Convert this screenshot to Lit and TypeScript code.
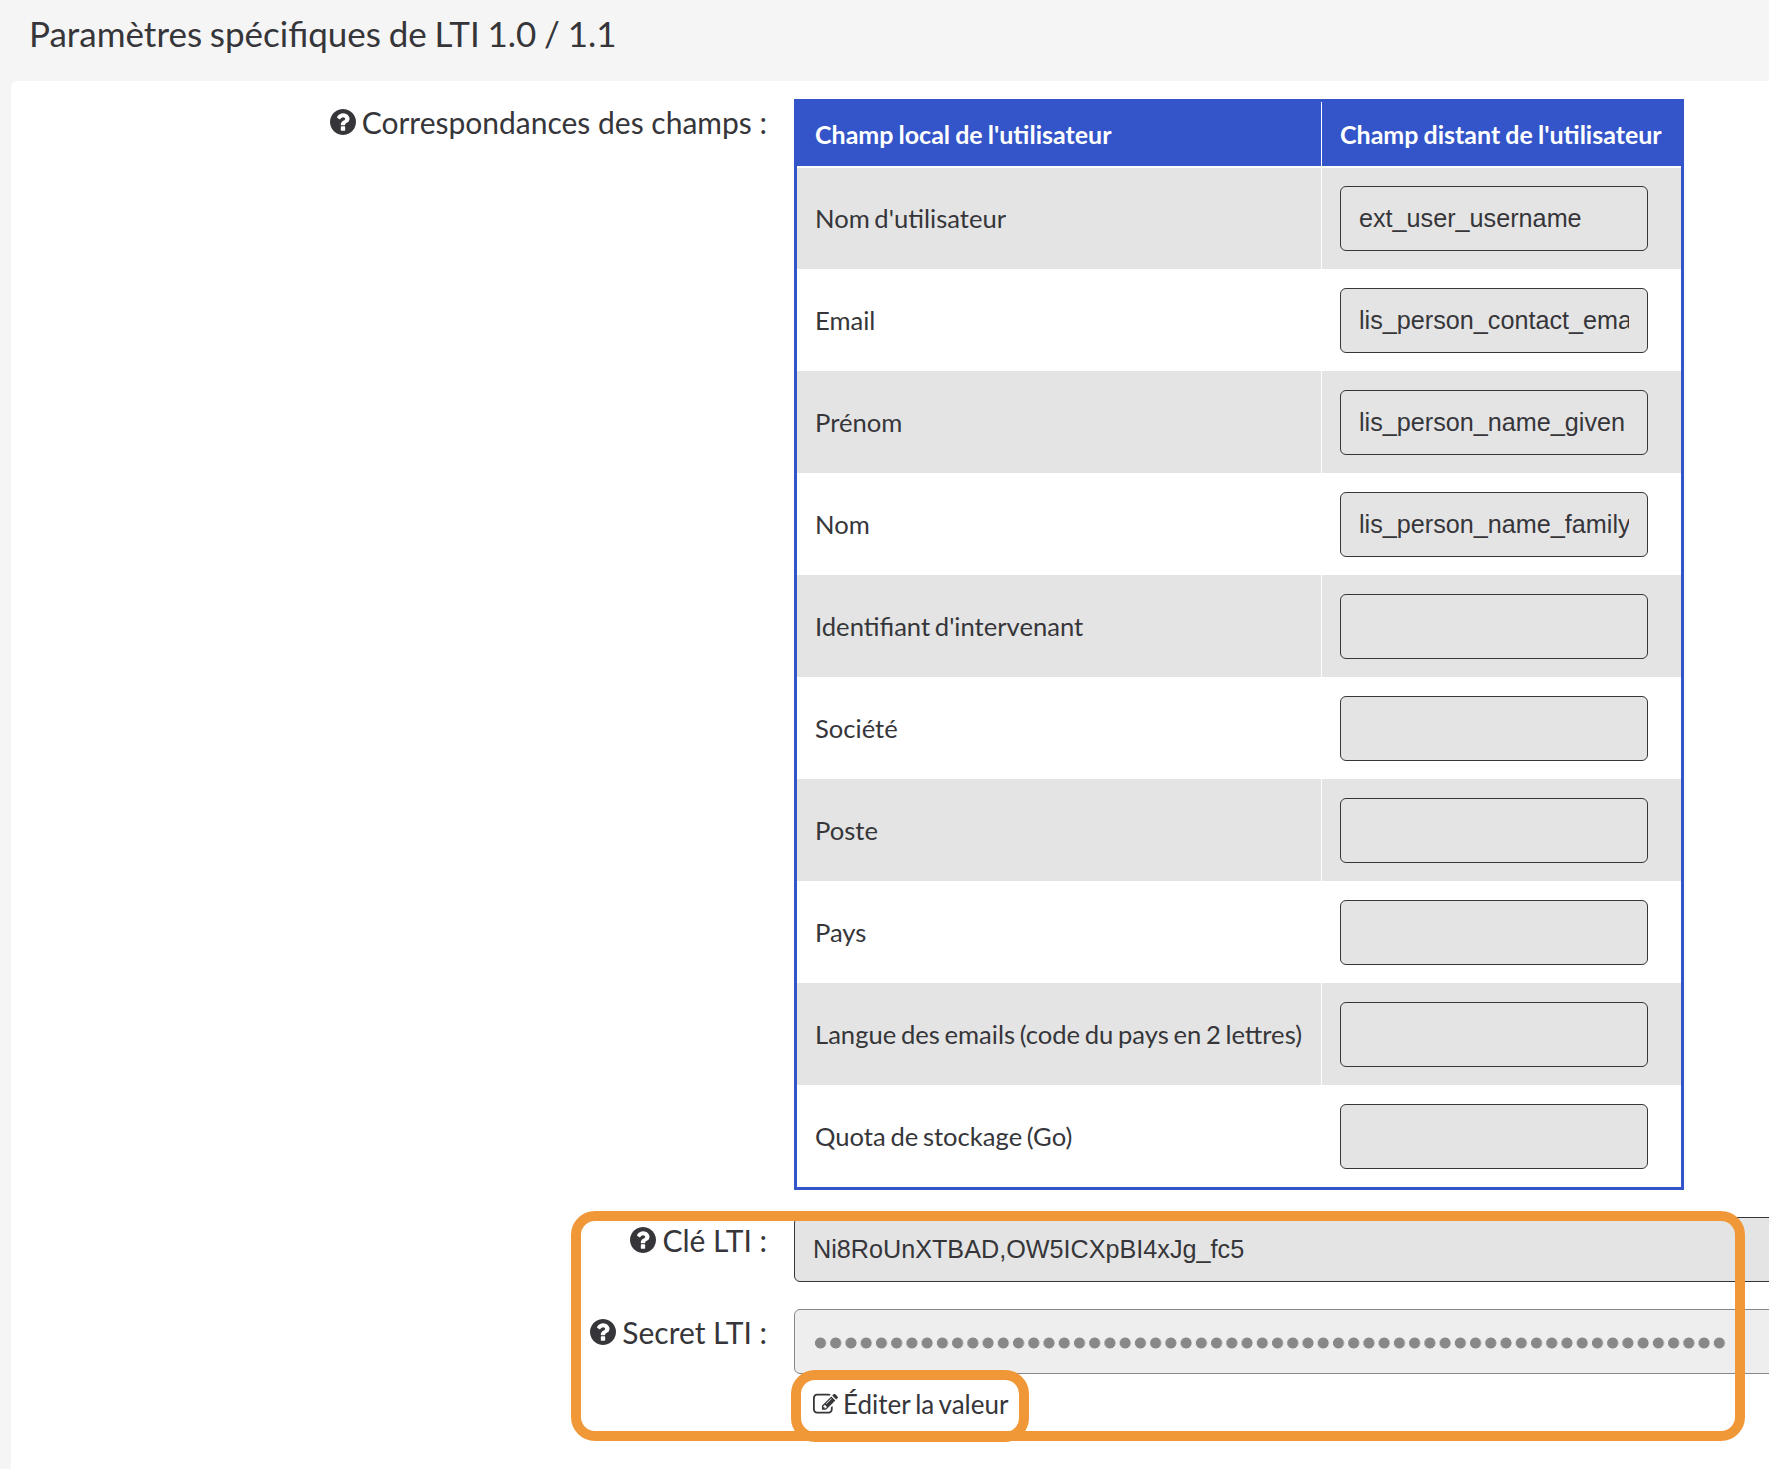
import { LitElement, html, css, svg } from "lit";
import { customElement } from "lit/decorators.js";

const help = html`<svg class="help" viewBox="128 128 1536 1536" aria-hidden="true"><path fill="currentColor" d="M1024 1376v-192q0-14-9-23t-23-9h-192q-14 0-23 9t-9 23v192q0 14 9 23t23 9h192q14 0 23-9t9-23zm256-672q0-88-55.500-163t-138.500-116-170-41q-243 0-371 213-15 24 8 42l132 100q7 6 19 6 16 0 25-12 53-68 86-92 34-24 86-24 48 0 85.500 26t37.500 59q0 38-20 61t-68 45q-63 28-115.500 86.500t-52.500 125.500v36q0 14 9 23t23 9h192q14 0 23-9t9-23q0-19 21.500-49.500t54.500-49.500q32-18 49-28.500t46-35 44.500-48 28-60.500 12.500-81zm384 192q0 209-103 385.500t-279.500 279.500-385.500 103-385.500-103-279.500-279.500-103-385.500 103-385.500 279.500-279.500 385.500-103 385.500 103 279.500 279.500 103 385.500z"/></svg>`;

const editIcon = svg`<svg class="edit" viewBox="0 0 1792 1792" aria-hidden="true"><path fill="currentColor" d="M888 1184l116-116-152-152-116 116v56h96v96h56zm440-720q-16-16-33 1l-350 350q-17 17-1 33t33-1l350-350q17-17 1-33zm80 594v190q0 119-84.500 203.500t-203.500 84.500h-832q-119 0-203.500-84.500t-84.500-203.500v-832q0-119 84.500-203.500t203.500-84.500h832q63 0 117 25 15 7 18 23 3 17-9 29l-49 49q-14 14-32 8-23-6-45-6h-832q-66 0-113 47t-47 113v832q0 66 47 113t113 47h832q66 0 113-47t47-113v-126q0-13 9-22l64-64q15-15 35-7t20 29zm-96-738l288 288-672 672h-288v-288zm444 132l-92 92-288-288 92-92q28-28 68-28t68 28l152 152q28 28 28 68t-28 68z"/></svg>`;

const rows: [string, string][] = [
  ["Nom d'utilisateur", "ext_user_username"],
  ["Email", "lis_person_contact_email_primary"],
  ["Prénom", "lis_person_name_given"],
  ["Nom", "lis_person_name_family"],
  ["Identifiant d'intervenant", ""],
  ["Société", ""],
  ["Poste", ""],
  ["Pays", ""],
  ["Langue des emails (code du pays en 2 lettres)", ""],
  ["Quota de stockage (Go)", ""],
];

@customElement("app-root")
export class AppRoot extends LitElement {
  static styles = css`
    :host {
      display: block;
      width: 1769px;
      height: 1469px;
      overflow: hidden;
      background: #f5f5f5;
      color: #36363a;
      font-family: Lato, sans-serif;
    }
    .title {
      margin: 0;
      height: 81px;
      box-sizing: border-box;
      padding: 12px 0 0 29px;
      font-size: 35px;
      word-spacing: -1.2px;
      line-height: 42px;
      font-weight: 400;
    }
    .card {
      position: relative;
      margin-left: 11px;
      height: 1388px;
      box-sizing: border-box;
      padding: 18px 0 0 0;
      background: #fff;
      border-radius: 6px 0 0 0;
      display: grid;
      grid-template-columns: 756px 1100px;
      column-gap: 27px;
      row-gap: 27px;
      align-content: start;
    }
    .label {
      display: flex;
      justify-content: flex-end;
      align-items: center;
      gap: 6px;
      height: 46px;
      font-size: 30px;
      white-space: nowrap;
    }
    .help { width: 26px; height: 26px; flex: none; }
    .map {
      width: 890px;
      box-sizing: border-box;
      border: 3px solid #3355c9;
      background: #fff;
    }
    .line {
      display: grid;
      grid-template-columns: 525px 1fr;
      height: 102px;
    }
    .line.even { background: #e4e4e4; }
    .head {
      position: relative;
      height: 66px;
      margin-bottom: -1px;
      box-sizing: border-box;
      background: #3355c9;
      border-bottom: 2px solid #fff;
      color: #fff;
      font-weight: 700;
    }
    .local {
      display: flex;
      align-items: center;
      padding-left: 18px;
      font-size: 25.6px;
      word-spacing: -1.9px;
      white-space: nowrap;
      border-right: 1px solid #fff;
      box-sizing: border-box;
    }
    .remote {
      display: flex;
      align-items: center;
      padding-left: 18px;
      white-space: nowrap;
    }
    .head .local, .head .remote { font-size: 25px; word-spacing: -1px; }
    .field {
      display: block;
      box-sizing: border-box;
      width: 308px;
      height: 65px;
      padding: 0 18px;
      border: 1px solid #36363a;
      border-radius: 6px;
      background: #e4e4e4;
      color: #36363a;
      font: 25.2px "Liberation Sans", Arial, sans-serif;
      outline: none;
    }
    .wide { width: 1100px; }
    .disabled {
      display: flex;
      align-items: center;
      background: #eee;
      border-color: #888;
    }
    .dots {
      width: 914px;
      height: 12px;
      margin: 2px 0 0 2px;
      background-image: radial-gradient(circle at 5.5px 6px, #888 5.2px, transparent 5.8px);
      background-size: 15.24px 12px;
      background-repeat: repeat-x;
    }
    .controls { display: flex; flex-direction: column; }
    .editrow {
      display: flex;
      align-items: center;
      gap: 5px;
      height: 50px;
      margin-top: 5px;
      padding-left: 19px;
      font-size: 26px;
      word-spacing: -1.7px;
    }
    .edit { width: 25px; height: 25px; flex: none; }
    .mark {
      position: absolute;
      box-sizing: border-box;
      border: 10px solid #f09737;
      pointer-events: none;
    }
    .mark.outer { left: 560px; top: 1130px; width: 1174px; height: 230px; border-radius: 24px; }
    .mark.inner { left: 780px; top: 1289px; width: 238px; height: 72px; border-radius: 24px; }
  `;

  render() {
    return html`
      <h1 class="title">Paramètres spécifiques de LTI 1.0 / 1.1</h1>
      <section class="card">
        <div class="label">${help}<span>Correspondances des champs :</span></div>
        <div class="map">
          <div class="line head">
            <div class="local">Champ local de l'utilisateur</div>
            <div class="remote">Champ distant de l'utilisateur</div>
          </div>
          ${rows.map(
            ([name, value], i) => html`
              <div class="line ${i % 2 === 0 ? "even" : ""}">
                <div class="local">${name}</div>
                <div class="remote"><input class="field" .value=${value} /></div>
              </div>
            `,
          )}
        </div>
        <div class="label">${help}<span>Clé LTI :</span></div>
        <div><input class="field wide" .value=${"Ni8RoUnXTBAD,OW5ICXpBI4xJg_fc5"} /></div>
        <div class="label">${help}<span>Secret LTI :</span></div>
        <div class="controls">
          <div class="field wide disabled"><div class="dots"></div></div>
          <div class="editrow">${editIcon}<span>Éditer la valeur</span></div>
        </div>
        <div class="mark outer"></div>
        <div class="mark inner"></div>
      </section>
    `;
  }
}
